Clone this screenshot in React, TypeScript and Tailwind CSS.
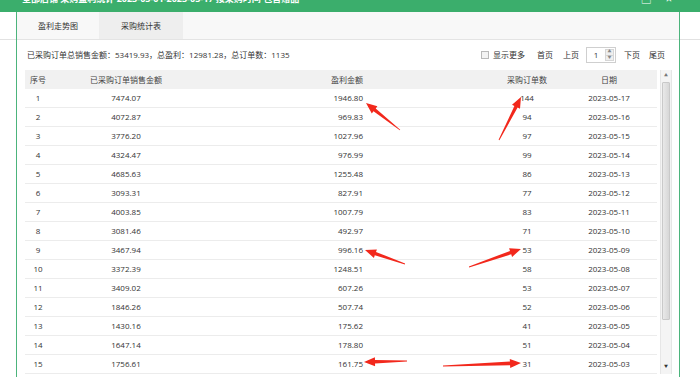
import React from "react";

const rows = [
  ["1", "7474.07", "1946.80", "144", "2023-05-17"],
  ["2", "4072.87", "969.83", "94", "2023-05-16"],
  ["3", "3776.20", "1027.96", "97", "2023-05-15"],
  ["4", "4324.47", "976.99", "99", "2023-05-14"],
  ["5", "4685.63", "1255.48", "86", "2023-05-13"],
  ["6", "3093.31", "827.91", "77", "2023-05-12"],
  ["7", "4003.85", "1007.79", "83", "2023-05-11"],
  ["8", "3081.46", "492.97", "71", "2023-05-10"],
  ["9", "3467.94", "996.16", "53", "2023-05-09"],
  ["10", "3372.39", "1248.51", "58", "2023-05-08"],
  ["11", "3409.02", "607.26", "53", "2023-05-07"],
  ["12", "1846.26", "507.74", "52", "2023-05-06"],
  ["13", "1430.16", "175.62", "41", "2023-05-05"],
  ["14", "1647.14", "178.80", "51", "2023-05-04"],
  ["15", "1756.61", "161.75", "31", "2023-05-03"],
];

// red annotation arrows: [tailX, tailY, tipX, tipY]
const arrows = [
  [400, 130, 366, 103],
  [499, 140, 521, 97],
  [405, 264, 365, 250],
  [469, 267, 521, 249],
  [407, 361, 364, 362],
  [443, 366, 521, 363],
];

const arrowPoints = (x1: number, y1: number, x2: number, y2: number) => {
  const len = Math.hypot(x2 - x1, y2 - y1);
  const dx = (x2 - x1) / len;
  const dy = (y2 - y1) / len;
  const nx = -dy;
  const ny = dx;
  const L = 11;
  const bx = x2 - dx * L;
  const by = y2 - dy * L;
  const p = (x: number, y: number, w: number) =>
    `${(x + nx * w).toFixed(1)},${(y + ny * w).toFixed(1)}`;
  return [
    p(x1, y1, 0.4),
    p(bx, by, 1.8),
    p(bx, by, 4.5),
    `${x2},${y2}`,
    p(bx, by, -4.5),
    p(bx, by, -1.8),
    p(x1, y1, -0.4),
  ].join(" ");
};

const gridCols = "grid grid-cols-[26px_150px_162px_204px_84px]";

export default function App() {
  return (
    <div className="relative w-[700px] h-[377px] overflow-hidden bg-white text-[8px] text-[#333] font-['Open_Sans','Noto_Sans_CJK_SC',sans-serif]">
      {/* title bar, cut off at the top */}
      <div className="h-[12px] bg-[#3bae6c] flex items-start overflow-hidden text-white">
        <div className="ml-[22px] -mt-[6px] text-[9px] leading-[9px] font-bold whitespace-nowrap">
          全部店铺 采购盈利统计 2023-05-01-2023-05-17 按采购时间 包含赠品
        </div>
        <div className="ml-auto mr-[28px] -mt-[7px] flex gap-[14px] text-[11px] leading-[11px]">
          <span>□</span>
          <span>×</span>
        </div>
      </div>

      <div className="flex">
        <div className="w-[16px] h-[28px] border-b border-[#e2e2e2]" />

        <div className="w-[664px] h-[365px] border-x border-[#4cb47c] bg-white flex flex-col">
          {/* tabs */}
          <div className="h-[28px] flex bg-[#f8f8f8] border-b border-[#e4e4e4]">
            <div className="w-[82px] flex items-center justify-center">盈利走势图</div>
            <div className="w-[84px] flex items-center justify-center bg-[#eeeeee]">采购统计表</div>
          </div>

          {/* summary + pagination */}
          <div className="h-[30px] flex items-center pl-[10px] pr-[14px]">
            <span>已采购订单总销售金额：53419.93，总盈利：12981.28，总订单数：1135</span>
            <div className="ml-auto flex items-center">
              <span className="w-[8px] h-[8px] border border-[#b9b9b9] bg-[#f3f3f3]" />
              <span className="ml-[4px]">显示更多</span>
              <span className="ml-[12px]">首页</span>
              <span className="ml-[10px]">上页</span>
              <div className="ml-[7px] w-[30px] h-[16px] border border-[#cfcfcf] flex items-stretch">
                <span className="flex-1 flex items-center justify-center">1</span>
                <div className="w-[9px] my-[1px] mr-[1px] flex flex-col bg-[#efefef] border border-[#d6d6d6] text-[#888]">
                  <span className="flex-1 flex items-center justify-center text-[4px] leading-none border-b border-[#d6d6d6]">▲</span>
                  <span className="flex-1 flex items-center justify-center text-[4px] leading-none">▼</span>
                </div>
              </div>
              <span className="ml-[8px]">下页</span>
              <span className="ml-[9px]">尾页</span>
            </div>
          </div>

          {/* table + scrollbar */}
          <div className="flex">
            <div className="ml-[8px] w-[632px]">
              <div className={`${gridCols} h-[19px] items-center bg-[#f1f1f1] text-[#444]`}>
                <span className="text-center">序号</span>
                <span className="text-center">已采购订单销售金额</span>
                <span className="text-right">盈利金额</span>
                <span className="pl-[124px] text-center">采购订单数</span>
                <span className="text-center">日期</span>
              </div>
              {rows.map((r) => (
                <div key={r[0]} className={`${gridCols} h-[19px] items-center border-b border-[#ececec]`}>
                  <span className="text-center">{r[0]}</span>
                  <span className="text-center">{r[1]}</span>
                  <span className="text-right">{r[2]}</span>
                  <span className="pl-[124px] text-center">{r[3]}</span>
                  <span className="text-center">{r[4]}</span>
                </div>
              ))}
            </div>

            <div className="ml-[3px] w-[12px] h-[304px] flex flex-col bg-[#f4f4f4] border-x border-[#e6e6e6]">
              <div className="h-[12px] flex items-center justify-center text-[4px] text-[#777]">▲</div>
              <div className="h-[238px] mx-[1px] rounded-[1px] border border-[#c9c9c9] bg-gradient-to-r from-[#e9e9e9] to-[#d7d7d7]" />
              <div className="flex-1" />
              <div className="h-[14px] flex items-center justify-center text-[4px] text-[#333]">▼</div>
            </div>
          </div>
        </div>

        <div className="flex-1 h-[28px] border-b border-[#e2e2e2]" />
      </div>

      <svg className="absolute inset-0 pointer-events-none" width="700" height="377" viewBox="0 0 700 377">
        {arrows.map((a, i) => (
          <polygon key={i} points={arrowPoints(a[0], a[1], a[2], a[3])} fill="#f2281c" />
        ))}
      </svg>
    </div>
  );
}
